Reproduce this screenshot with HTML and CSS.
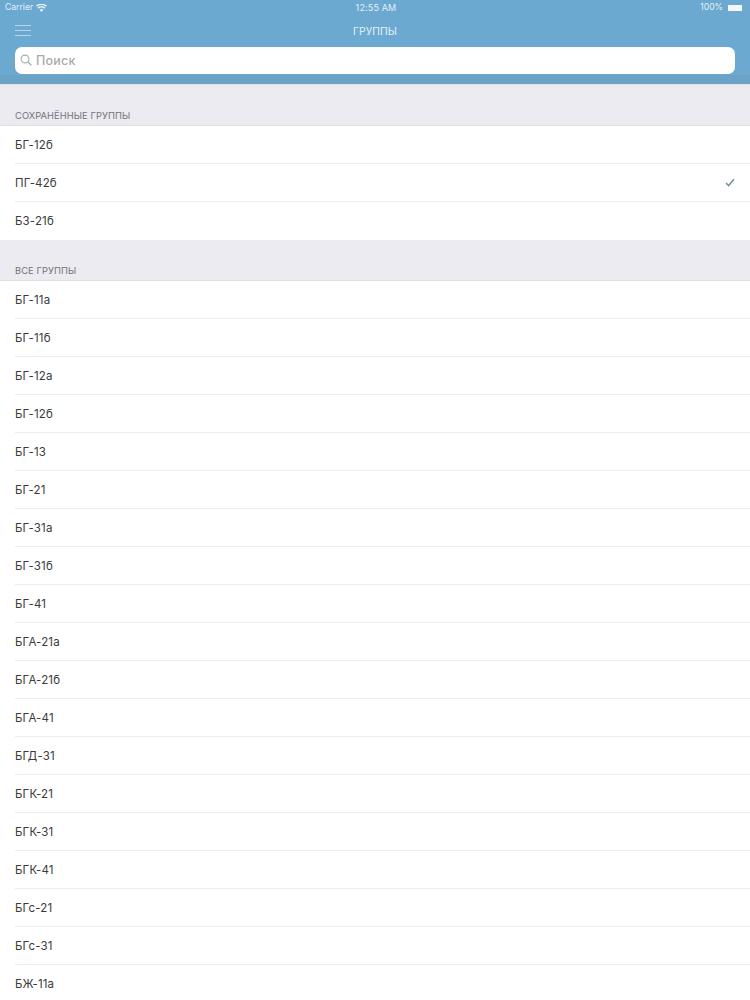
FILE: index.html
```html
<!DOCTYPE html>
<html lang="ru">
<head>
<meta charset="utf-8">
<title>Группы</title>
<link rel="stylesheet" href="styles.css">
</head>
<body>
<header class="header">
  <div class="status">
    <div class="status-left">
      <span>Carrier</span>
      <svg class="wifi" width="11" height="8" viewBox="0 0 11 8"><path d="M5.5 8 3.6 5.8a2.8 2.8 0 0 1 3.8 0zM2.7 4.8 1.6 3.6a5.8 5.8 0 0 1 7.8 0L8.3 4.8a4.2 4.2 0 0 0-5.6 0zM.9 2.8 0 1.8a8 8 0 0 1 11 0l-.9 1a6.7 6.7 0 0 0-9.2 0z" fill="#e6f2f9"/></svg>
    </div>
    <div class="status-time">12:55 AM</div>
    <div class="status-right">
      <span>100%</span>
      <span class="battery"></span>
    </div>
  </div>
  <div class="navbar">
    <div class="menu"><i></i><i></i><i></i></div>
    <div class="title">ГРУППЫ</div>
  </div>
  <div class="search">
    <svg class="search-icon" width="12" height="12" viewBox="0 0 12 12"><circle cx="5" cy="5" r="3.9" fill="none" stroke="#a9adad" stroke-width="1.1"/><path d="M8 8l3.3 3.3" stroke="#a9adad" stroke-width="1.3" fill="none"/></svg>
    <span class="search-text">Поиск</span>
  </div>
</header>
<main>
  <div class="section">СОХРАНЁННЫЕ ГРУППЫ</div>
  <ul class="list">
    <li class="row"><span>БГ-12б</span></li>
    <li class="row"><span>ПГ-42б</span>
      <svg class="check" width="10" height="9" viewBox="0 0 10 9"><path d="M1 5l2.6 2.6L9 1.2" fill="none" stroke="#75939a" stroke-width="1.5"/></svg>
    </li>
    <li class="row"><span>БЗ-21б</span></li>
  </ul>
  <div class="section">ВСЕ ГРУППЫ</div>
  <ul class="list">
    <li class="row"><span>БГ-11а</span></li>
    <li class="row"><span>БГ-11б</span></li>
    <li class="row"><span>БГ-12а</span></li>
    <li class="row"><span>БГ-12б</span></li>
    <li class="row"><span>БГ-13</span></li>
    <li class="row"><span>БГ-21</span></li>
    <li class="row"><span>БГ-31а</span></li>
    <li class="row"><span>БГ-31б</span></li>
    <li class="row"><span>БГ-41</span></li>
    <li class="row"><span>БГА-21а</span></li>
    <li class="row"><span>БГА-21б</span></li>
    <li class="row"><span>БГА-41</span></li>
    <li class="row"><span>БГД-31</span></li>
    <li class="row"><span>БГК-21</span></li>
    <li class="row"><span>БГК-31</span></li>
    <li class="row"><span>БГК-41</span></li>
    <li class="row"><span>БГс-21</span></li>
    <li class="row"><span>БГс-31</span></li>
    <li class="row"><span>БЖ-11а</span></li>
  </ul>
</main>
</body>
</html>
```
FILE: styles.css
```css
* { box-sizing: border-box; }
html, body { margin: 0; padding: 0; }
body {
  width: 750px;
  height: 1000px;
  overflow: hidden;
  background: #fff;
  font-family: Inter, "Liberation Sans", sans-serif;
  color: #3a3a3c;
}
.header {
  height: 85px;
  background: linear-gradient(#6ca9d0 75px, #6aa3c6 75px);
  padding: 0 15px;
  border-bottom: 1px solid #d3e2f0;
}
.status {
  height: 15px;
  margin: 0 -10px;
  display: grid;
  grid-template-columns: 1fr auto 1fr;
  align-items: center;
  color: #e3eff7;
  font-size: 8.6px;
  line-height: 15px;
}
.status-left { display: flex; align-items: center; gap: 3px; }
.wifi { display: block; }
.status-time { font-size: 9px; letter-spacing: 0.15px; padding-left: 2px; }
.status-right { display: flex; justify-content: flex-end; align-items: center; gap: 5px; margin-right: 3px; }
.battery { width: 14px; height: 6px; display: block; background: #f2f8fb; }
.navbar {
  height: 32px;
  display: flex;
  align-items: center;
  justify-content: center;
  position: relative;
}
.menu {
  position: absolute;
  left: 0;
  top: 10px;
  width: 16px;
  display: flex;
  flex-direction: column;
  gap: 4px;
}
.menu i { display: block; height: 1px; background: #b9d6e8; }
.title { color: #e6f1f8; font-size: 10.3px; letter-spacing: 0.1px; }
.search {
  height: 27px;
  background: #fff;
  border-radius: 7px;
  display: flex;
  align-items: center;
  padding: 0 0 1px 5px;
  gap: 4px;
}
.search-icon { display: block; }
.search-text { color: #a9aaa8; font-size: 12.5px; font-weight: 500; letter-spacing: 0.2px; }
.section {
  height: 41px;
  background: #ecebf1;
  padding: 25px 15px 0;
  font-size: 9.3px;
  line-height: 12px;
  color: #737378;
  letter-spacing: 0.1px;
  border-bottom: 1px solid #e0e0e4;
}
.list { list-style: none; margin: 0; padding: 0 0 0 15px; }
.row {
  height: 38.03px;
  display: flex;
  align-items: center;
  justify-content: space-between;
  padding-right: 15px;
  border-bottom: 1px solid #ececee;
  font-size: 11.5px;
  letter-spacing: 0.15px;
}
.list .row:last-child { border-bottom: 0; }
.check { display: block; }
```
